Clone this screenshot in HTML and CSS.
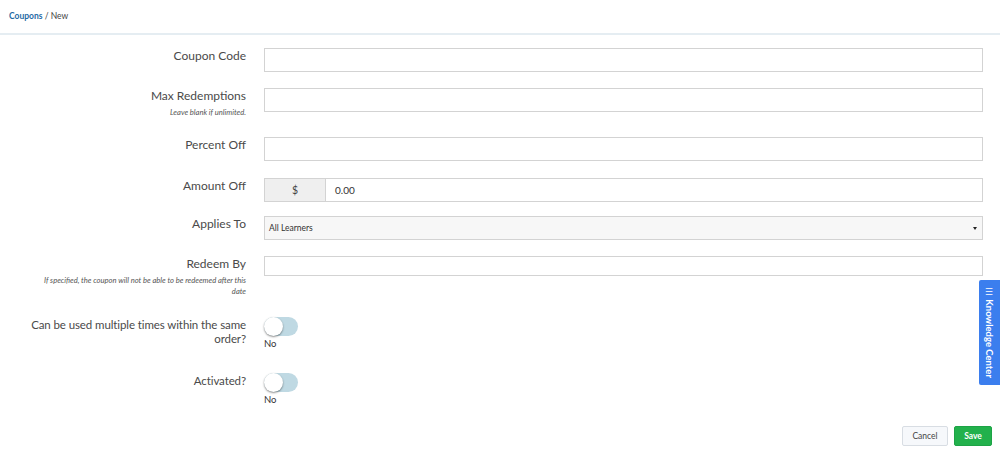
FILE: index.html
```html
<!DOCTYPE html>
<html>
<head>
<meta charset="utf-8">
<link rel="stylesheet" href="styles.css">
</head>
<body>
<header class="topbar">
  <nav class="crumbs"><a class="crumb-link">Coupons</a> / New</nav>
</header>
<main class="form">
  <div class="row r1">
    <div class="label-col"><label class="label">Coupon Code</label></div>
    <div class="field-col"><div class="input"></div></div>
  </div>
  <div class="row r2">
    <div class="label-col"><label class="label">Max Redemptions</label><div class="help">Leave blank if unlimited.</div></div>
    <div class="field-col"><div class="input"></div></div>
  </div>
  <div class="row r3">
    <div class="label-col"><label class="label">Percent Off</label></div>
    <div class="field-col"><div class="input"></div></div>
  </div>
  <div class="row r4">
    <div class="label-col"><label class="label">Amount Off</label></div>
    <div class="field-col">
      <div class="input-group"><span class="addon">$</span><span class="input grow">0.00</span></div>
    </div>
  </div>
  <div class="row r5">
    <div class="label-col"><label class="label">Applies To</label></div>
    <div class="field-col"><div class="select">All Learners<span class="caret"></span></div></div>
  </div>
  <div class="row r6">
    <div class="label-col"><label class="label">Redeem By</label><div class="help">If specified, the coupon will not be able to be redeemed after this date</div></div>
    <div class="field-col"><div class="input short"></div></div>
  </div>
  <div class="row r7">
    <div class="label-col"><label class="label big">Can be used multiple times within the same order?</label></div>
    <div class="field-col"><div class="toggle"><span class="knob"></span></div><div class="toggle-text">No</div></div>
  </div>
  <div class="row r8">
    <div class="label-col"><label class="label big">Activated?</label></div>
    <div class="field-col"><div class="toggle"><span class="knob"></span></div><div class="toggle-text">No</div></div>
  </div>
  <div class="actions">
    <button class="btn cancel">Cancel</button>
    <button class="btn save">Save</button>
  </div>
</main>
<div class="kc-tab"><span class="kc-icon">&#9776;</span> Knowledge Center</div>
</body>
</html>
```
FILE: styles.css
```css
* { box-sizing: border-box; }
html, body { margin: 0; padding: 0; }
body {
  font-family: Lato, "Open Sans", "Liberation Sans", sans-serif;
  color: #444;
  background: #fff;
  width: 1000px;
  height: 454px;
  overflow: hidden;
  position: relative;
}
.topbar {
  height: 35px;
  border-bottom: 2px solid #e5edf2;
  padding: 10px 0 0 9px;
}
.crumbs { font-size: 8.5px; color: #444; line-height: 12px; }
.crumb-link { color: #1f6aa5; font-weight: 700; }
.form { padding: 13px 17px 0 28px; }
.row {
  display: grid;
  grid-template-columns: 218px 719px;
  column-gap: 18px;
}
.label-col { text-align: right; }
.label {
  display: block;
  font-size: 12px;
  line-height: 16px;
  color: #4a4a4a;
}
.label.big { font-size: 11.5px; letter-spacing: -0.1px; line-height: 14px; padding-top: 1px; }
.help {
  font-size: 7.6px;
  font-style: italic;
  color: #555;
  line-height: 11px;
  margin-top: 3px;
  padding-left: 9px;
}
.input {
  display: block;
  height: 24px;
  border: 1px solid #d3d3d3;
  background: #fff;
  font-size: 10px;
  line-height: 22px;
  padding: 0 9px;
  color: #333;
}
.input.short { height: 20px; }
.input-group { display: flex; height: 24px; }
.addon {
  width: 61px;
  background: #efefef;
  border: 1px solid #d3d3d3;
  border-right: none;
  text-align: center;
  font-size: 10.5px;
  line-height: 22px;
  color: #444;
}
.input.grow { flex: 1; }
.select {
  height: 24px;
  border: 1px solid #d3d3d3;
  background: #f7f7f7;
  font-size: 8.5px;
  line-height: 22px;
  padding: 0 4px;
  color: #333;
  position: relative;
}
.caret {
  position: absolute;
  right: 5px;
  top: 10px;
  border-left: 2.5px solid transparent;
  border-right: 2.5px solid transparent;
  border-top: 3px solid #222;
}
.r1 { margin-bottom: 16px; }
.r2 { margin-bottom: 17px; padding-bottom: 2px; }
.r3 { margin-bottom: 17px; }
.r4 { margin-bottom: 14px; }
.r5 { margin-bottom: 16px; }
.r6 { margin-bottom: 20px; }
.r7 { margin-bottom: 23px; }
.r8 { margin-bottom: 20px; }
.toggle {
  width: 34px;
  height: 19px;
  border-radius: 10px;
  background: #bfd9e3;
  position: relative;
}
.knob {
  position: absolute;
  left: 0;
  top: 0;
  width: 19px;
  height: 19px;
  border-radius: 50%;
  background: #fff;
  box-shadow: 0 1px 2px rgba(0,0,0,0.45);
}
.toggle-text {
  font-size: 9.5px;
  line-height: 12px;
  margin-top: 2px;
  color: #333;
}
.actions {
  display: flex;
  justify-content: flex-end;
  gap: 6px;
  margin-right: -9px;
}
.btn {
  height: 20px;
  font-family: Lato, "Liberation Sans", sans-serif;
  font-size: 8.5px;
  border-radius: 2px;
  padding: 0;
  cursor: pointer;
}
.cancel {
  width: 46px;
  background: #f6f8fb;
  border: 1px solid #d8dde3;
  color: #444;
}
.save {
  width: 38px;
  background: #22b14c;
  border: 1px solid #1da346;
  color: #fff;
  font-weight: 700;
}
.kc-tab {
  position: absolute;
  right: 0;
  top: 280px;
  width: 21px;
  height: 105px;
  background: #3b7eee;
  color: #fff;
  font-size: 9.5px;
  font-weight: 700;
  writing-mode: vertical-rl;
  text-align: center;
  line-height: 21px;
  border-radius: 2px 0 0 2px;
  white-space: nowrap;
}
.kc-icon { font-weight: 400; font-size: 9px; }
```
